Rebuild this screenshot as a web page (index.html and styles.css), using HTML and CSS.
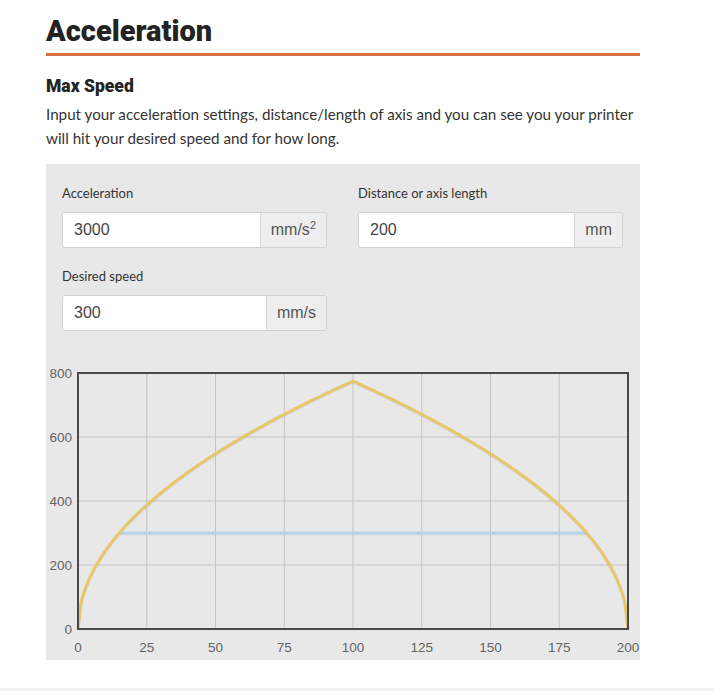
FILE: index.html
```html
<!DOCTYPE html>
<html lang="en">
<head>
  <meta charset="UTF-8" />
  <meta name="viewport" content="width=device-width, initial-scale=1.0" />
  <title>Acceleration</title>
  <link rel="stylesheet" href="styles.css">
</head>
<body>
  <div class="container">
    <h2 class="section-title">Acceleration</h2>

    <h3 class="sub-title">Max Speed</h3>
    <p class="intro">Input your acceleration settings, distance/length of axis and you can see you your printer will hit your desired speed and for how long.</p>

    <div class="panel">
      <div class="form-grid">
        <div class="field">
          <label for="accel">Acceleration</label>
          <div class="input-group">
            <input id="accel" type="text" value="3000">
            <span class="addon"><span>mm/s<sup>2</sup></span></span>
          </div>
        </div>
        <div class="field">
          <label for="dist">Distance or axis length</label>
          <div class="input-group">
            <input id="dist" type="text" value="200">
            <span class="addon"><span>mm</span></span>
          </div>
        </div>
        <div class="field">
          <label for="speed">Desired speed</label>
          <div class="input-group">
            <input id="speed" type="text" value="300">
            <span class="addon"><span>mm/s</span></span>
          </div>
        </div>
      </div>

      <div class="chart">
        <svg id="chart" width="594" height="300" viewBox="0 0 594 300"></svg>
      </div>
    </div>
  </div>
  <div class="footer-line"></div>

  <script>
    // plot area inside the svg
    const X0 = 32, X1 = 582, Y0 = 269, Y1 = 13;
    const MAXV = 800;

    function drawChart() {
      const a = parseFloat(document.getElementById("accel").value);
      const d = parseFloat(document.getElementById("dist").value);
      const v = parseFloat(document.getElementById("speed").value);
      const svg = document.getElementById("chart");

      const sx = x => X0 + (x / d) * (X1 - X0);
      const sy = y => Y0 - (y / MAXV) * (Y0 - Y1);

      let html = "";

      // grid
      for (let x = 25; x < d; x += 25) {
        html += `<line class="grid" x1="${sx(x)}" y1="${Y1}" x2="${sx(x)}" y2="${Y0}"/>`;
      }
      for (let y = 200; y < MAXV; y += 200) {
        html += `<line class="grid" x1="${X0}" y1="${sy(y)}" x2="${X1}" y2="${sy(y)}"/>`;
      }

      // labels
      for (let x = 0; x <= d; x += 25) {
        html += `<text class="tick" x="${sx(x)}" y="${Y0 + 23}" text-anchor="middle">${x}</text>`;
      }
      for (let y = 0; y <= MAXV; y += 200) {
        html += `<text class="tick" x="${X0 - 6}" y="${sy(y) + 5}" text-anchor="end">${y}</text>`;
      }

      // speed curve (accelerate then decelerate)
      const pts = [];
      for (let i = 0; i <= 200; i++) {
        const x = d * i / 200;
        const s = Math.sqrt(2 * a * Math.min(x, d - x));
        pts.push(sx(x).toFixed(2) + "," + sy(s).toFixed(2));
      }

      // desired speed line
      const xs = (v * v) / (2 * a);
      if (xs < d / 2) {
        html += `<line class="speed-shadow" x1="${sx(xs)}" y1="${sy(v) + 1}" x2="${sx(d - xs)}" y2="${sy(v) + 1}"/>`;
        html += `<line class="speed" x1="${sx(xs)}" y1="${sy(v)}" x2="${sx(d - xs)}" y2="${sy(v)}"/>`;
      }

      html += `<polyline class="curve-shadow" transform="translate(0,1)" points="${pts.join(" ")}"/>`;
      html += `<polyline class="curve" points="${pts.join(" ")}"/>`;

      // frame
      html += `<rect class="frame" x="${X0}" y="${Y1}" width="${X1 - X0}" height="${Y0 - Y1}"/>`;

      svg.innerHTML = html;
    }

    document.querySelectorAll("input").forEach(i => i.addEventListener("input", drawChart));
    drawChart();
  </script>
</body>
</html>
```

FILE: styles.css
```css
body {
  margin: 0;
  font-family: "Lato", "Liberation Sans", sans-serif;
  color: #333;
  background: #fff;
}

.container {
  width: 594px;
  margin-left: 46px;
  padding-top: 14px;
}

.section-title {
  margin: 0;
  padding-bottom: 5px;
  font-family: "Roboto", "Liberation Sans", sans-serif;
  font-size: 29px;
  font-weight: 900;
  line-height: 34px;
  color: #232323;
  border-bottom: 3px solid #d76f3f;
}

.sub-title {
  margin: 19px 0 0;
  font-family: "Roboto", "Liberation Sans", sans-serif;
  font-size: 17.5px;
  font-weight: 900;
  line-height: 22px;
  color: #232323;
}

.intro {
  margin: 5px 0 14px;
  font-size: 15.2px;
  line-height: 24px;
  color: #333;
}

.panel {
  background-color: #e8e8e8;
  height: 496px;
}

.form-grid {
  display: grid;
  grid-template-columns: 265px 265px;
  column-gap: 31px;
  row-gap: 19px;
  padding: 20px 17px 0 16px;
}

.field label {
  display: block;
  margin-bottom: 10px;
  font-size: 13px;
  line-height: 18px;
  color: #333;
}

.input-group {
  display: flex;
  height: 36px;
  border: 1px solid #d2d2d2;
  border-radius: 3px;
  box-sizing: border-box;
  overflow: hidden;
}

.input-group input {
  flex: 1;
  min-width: 0;
  border: none;
  padding: 0 11px;
  font-family: "Liberation Sans", Arial, sans-serif;
  font-size: 16px;
  color: #444;
  background: #fff;
  outline: none;
}

.addon {
  display: flex;
  align-items: center;
  padding: 0 10px;
  border-left: 1px solid #d8d8d8;
  background-color: #eeeeee;
  font-family: "Liberation Sans", Arial, sans-serif;
  font-size: 16px;
  color: #555;
}

.addon sup {
  font-size: 11px;
  line-height: 0;
}

.chart {
  margin-top: 29px;
}

.chart svg {
  display: block;
}

.grid {
  stroke: #c4c4c4;
  stroke-width: 1;
}

.tick {
  font-family: "Liberation Sans", Arial, sans-serif;
  font-size: 13.5px;
  fill: #636363;
}

.curve {
  fill: none;
  stroke: #e8c76a;
  stroke-width: 3;
  stroke-linejoin: round;
}

.curve-shadow {
  fill: none;
  stroke: rgba(0, 0, 0, 0.08);
  stroke-width: 3;
}

.speed {
  stroke: #b9d3ea;
  stroke-width: 3;
}

.speed-shadow {
  stroke: rgba(0, 0, 0, 0.06);
  stroke-width: 3;
}

.frame {
  fill: none;
  stroke: #4a4a4a;
  stroke-width: 2;
}

.footer-line {
  margin-top: 28px;
  height: 3px;
  background-color: #f2f2f2;
}
```
